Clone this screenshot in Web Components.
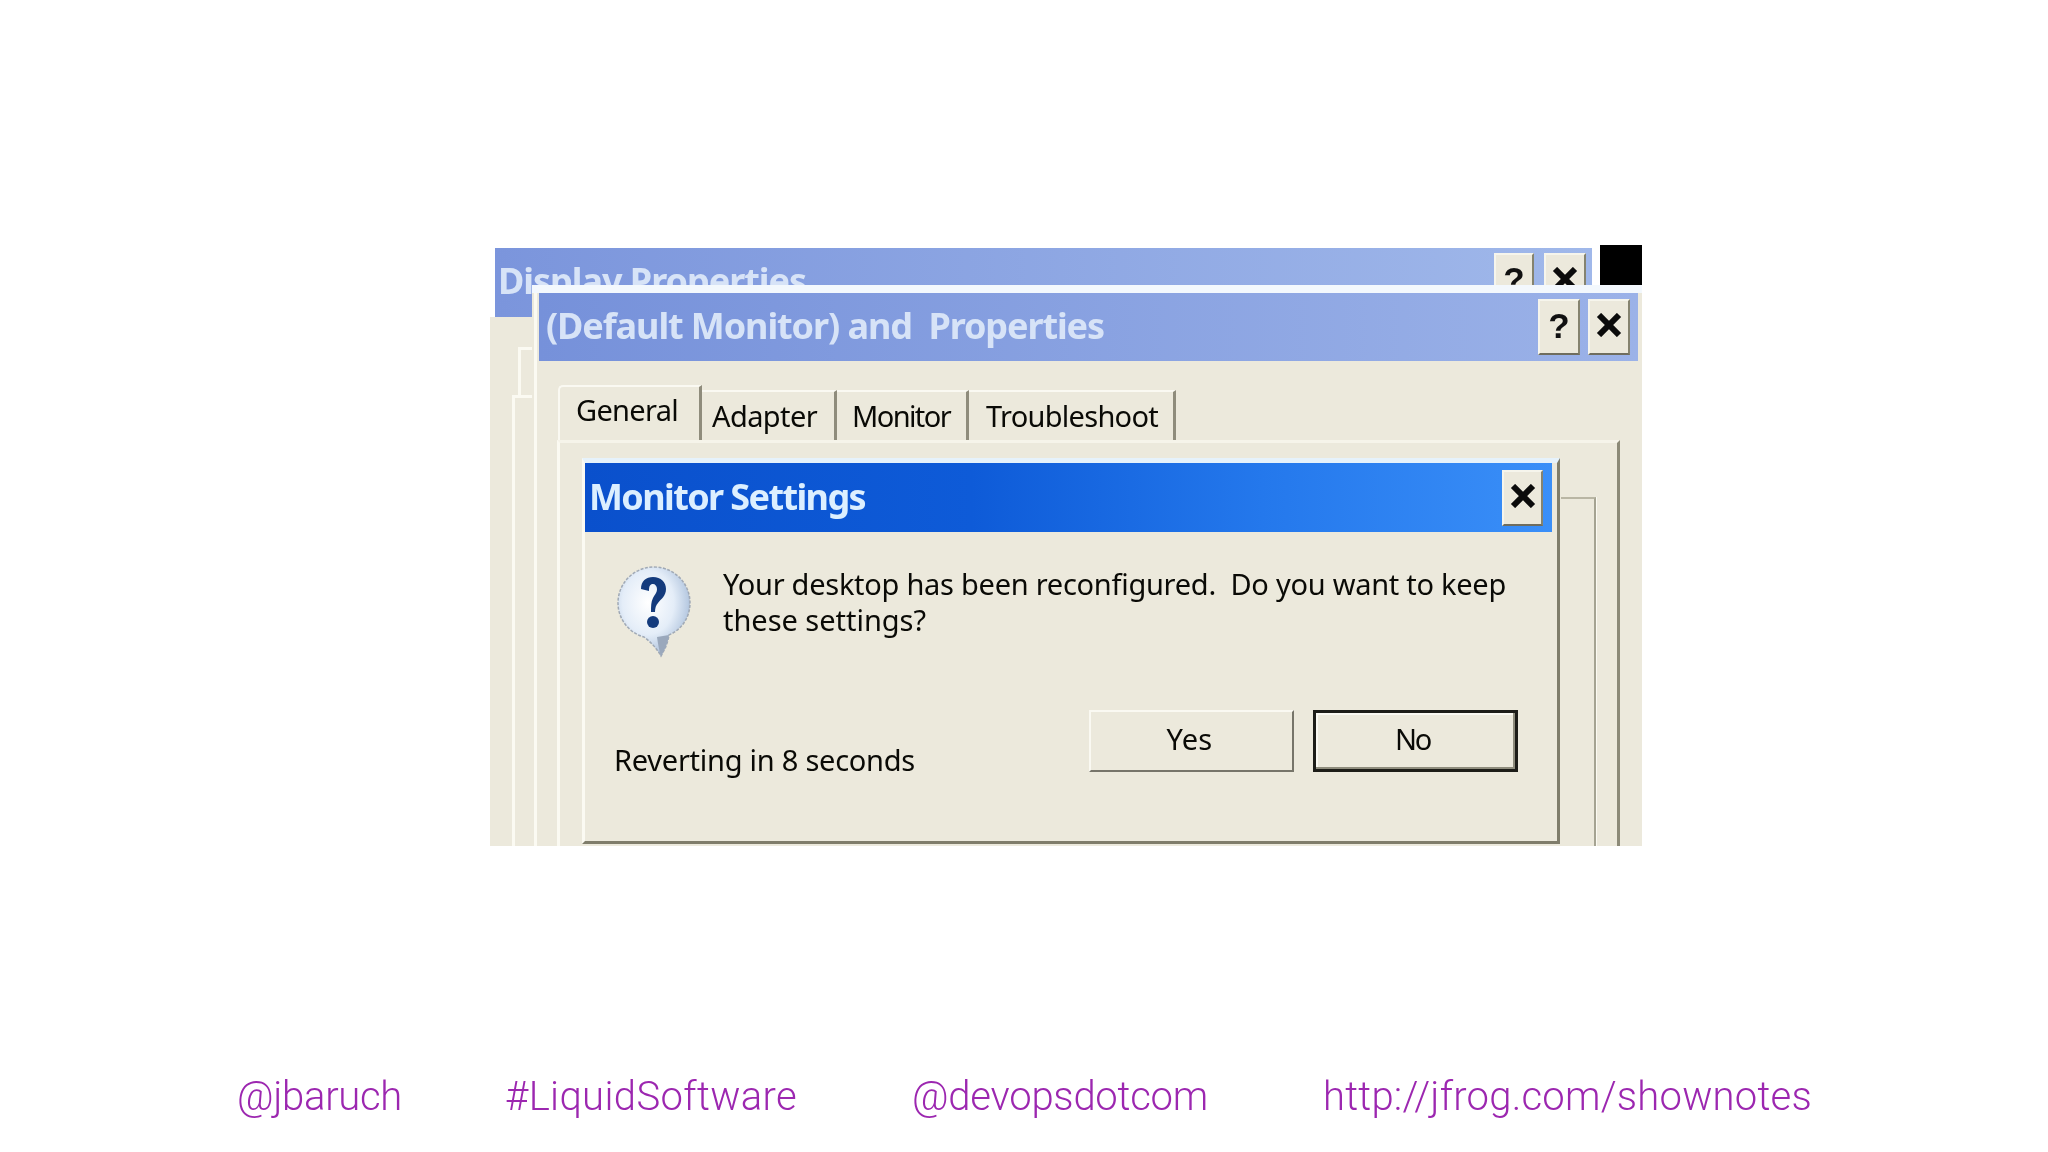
<!DOCTYPE html>
<html lang="en">
<head>
<meta charset="utf-8">
<title>Monitor Settings</title>
<style>
html,body{margin:0;padding:0;background:#fff}
body{width:2048px;height:1152px;overflow:hidden}
</style>
</head>
<body>
<x-slide>
  <x-shot>
    <x-titlebar slot="back" kind="back" pad="3" h="69">
      <x-t w="308" size="36" weight="700" color="#d7e3f7">Display Properties</x-t>
      <x-capbtn slot="btns" w="40" glyph="help"></x-capbtn>
      <x-capbtn slot="btns" w="42" glyph="close"></x-capbtn>
    </x-titlebar>
    <x-window>
      <x-titlebar slot="title" kind="prop" pad="7" h="68">
        <x-t w="558" size="36" weight="700" color="#d7e3f7">(Default Monitor) and  Properties</x-t>
        <x-capbtn slot="btns" w="42" glyph="help"></x-capbtn>
        <x-capbtn slot="btns" w="42" glyph="close"></x-capbtn>
      </x-titlebar>
      <x-tabs slot="tabs">
        <x-tab active style="--w:144px;--pl:16px"><x-t w="102" size="29">General</x-t></x-tab>
        <x-tab style="--w:135px;--pl:10px"><x-t w="105" size="29">Adapter</x-t></x-tab>
        <x-tab style="--w:132px;--pl:15px"><x-t w="98" size="29">Monitor</x-t></x-tab>
        <x-tab style="--w:207px;--pl:17px"><x-t w="172" size="29">Troubleshoot</x-t></x-tab>
      </x-tabs>
      <x-panel slot="panel">
        <x-dialog>
          <x-titlebar slot="title" kind="active" pad="4" h="69">
            <x-t w="276" size="36" weight="700" color="#dcefff">Monitor Settings</x-t>
            <x-capbtn slot="btns" w="41" glyph="close"></x-capbtn>
          </x-titlebar>
          <x-qicon slot="icon"></x-qicon>
          <x-message slot="message">
            <x-t w="783" size="29">Your desktop has been reconfigured.  Do you want to keep</x-t>
            <x-t w="203" size="29">these settings?</x-t>
          </x-message>
          <x-t slot="status" w="301" size="29">Reverting in 8 seconds</x-t>
          <x-btn slot="actions"><x-t w="46" size="29">Yes</x-t></x-btn>
          <x-btn slot="actions" default><x-t w="35" size="29">No</x-t></x-btn>
        </x-dialog>
      </x-panel>
    </x-window>
  </x-shot>
  <x-footer>
    <x-link style="--w:268px"><x-t w="165" size="40" weight="300" family="Roboto" color="#9c27b0">@jbaruch</x-t></x-link>
    <x-link style="--w:407px"><x-t w="292" size="40" weight="300" family="Roboto" color="#9c27b0">#LiquidSoftware</x-t></x-link>
    <x-link style="--w:411px"><x-t w="296" size="40" weight="300" family="Roboto" color="#9c27b0">@devopsdotcom</x-t></x-link>
    <x-link style="--w:488px"><x-t w="489" size="40" weight="300" family="Roboto" color="#9c27b0">http://jfrog.com/shownotes</x-t></x-link>
  </x-footer>
</x-slide>

<script>
const ctx = document.createElement('canvas').getContext('2d');
function def(name, css, html, init){
  customElements.define(name, class extends HTMLElement{
    constructor(){super();const r=this.attachShadow({mode:'open'});
      r.innerHTML='<style>'+css+'</style>'+(typeof html==='function'?html(this):html);}
    connectedCallback(){ if(init) init(this); }
  });
}
/* Text fitted to a measured width with letter-spacing */
def('x-t',':host{display:block;white-space:pre;line-height:36px}','<slot></slot>',el=>{
  const size=+el.getAttribute('size'),weight=el.getAttribute('weight')||400,
    fam=el.getAttribute('family')||'Noto Sans',w=+el.getAttribute('w'),
    txt=el.textContent;
  ctx.font=`${weight} ${size}px "${fam}"`;
  el.style.cssText+=`;font:${weight} ${size}px "${fam}",sans-serif;color:${el.getAttribute('color')||'#0a0a06'};`+
    `letter-spacing:${((w-ctx.measureText(txt).width)/txt.length).toFixed(3)}px;line-height:36px`;
});
def('x-slide',':host{display:flex;flex-direction:column;width:2048px;height:1152px;background:#fff}','<slot></slot>');
def('x-shot',`:host{display:block;position:relative;box-sizing:border-box;width:1152px;height:601px;margin:245px 0 0 490px;
  background:linear-gradient(#fff,#fff) 0 0/100% 72px no-repeat,#ece9dc;filter:blur(.75px);overflow:hidden}
  .back{position:absolute;left:5px;top:3px;width:1097px}
  .black{position:absolute;left:1110px;top:0;width:42px;height:40px;background:#000}
  .line{position:absolute;background:#fbfaf2}
  .a{left:22px;top:150px;width:3px;bottom:0}.a2{left:22px;top:150px;width:20px;height:3px}
  .b{left:28px;top:102px;width:3px;height:48px}.b2{left:28px;top:102px;width:14px;height:3px}`,
  `<div class="back"><slot name="back"></slot></div><div class="black"></div>
   <div class="line a"></div><div class="line a2"></div><div class="line b"></div><div class="line b2"></div><slot></slot>`);
def('x-window',`:host{position:absolute;left:42px;top:40px;width:1110px;height:561px;box-sizing:border-box;display:flex;flex-direction:column;
   background:#ece9dc;border-top:8px solid #f3f8fd}
  .left{position:absolute;left:2px;top:0;bottom:0;width:3px;background:#fbfaf2}
  .t{margin-left:7px;width:1099px}.tabs{margin:24px 0 0 26px}.p{flex:1;margin-left:25px;margin-right:22px;display:flex;min-height:0}`,
  `<div class="left"></div><div class="t"><slot name="title"></slot></div><div class="tabs"><slot name="tabs"></slot></div><div class="p"><slot name="panel"></slot></div>`);
def('x-titlebar',`:host{display:flex;align-items:center;justify-content:space-between;box-sizing:border-box}
  :host([kind=back]){background:linear-gradient(90deg,#7b95dc,#a0b8ea);align-items:flex-start;padding-top:5px}
  :host([kind=prop]){background:linear-gradient(90deg,#7691da,#9bb2e8)}
  :host([kind=active]){background:linear-gradient(90deg,#0a50cc 0%,#0e5bd8 40%,#2478ec 70%,#3a8ff8 100%)}
  .txt{flex:1;white-space:nowrap;margin-top:-2px}.btns{display:flex;gap:8px;margin-right:8px}
  :host([kind=back]) .btns{gap:10px;margin-right:6px}:host([kind=back]) .txt{margin-top:10px}
  :host([kind=active]) .btns{margin-right:9px}`,
  el=>`<style>:host{height:${el.getAttribute('h')}px;padding-left:${el.getAttribute('pad')}px}</style><div class="txt"><slot></slot></div><div class="btns"><slot name="btns"></slot></div>`);
def('x-capbtn',`:host{display:flex;align-items:center;justify-content:center;box-sizing:border-box;height:56px;padding-bottom:4px;background:#ece9dc;
   border:2px solid;border-color:#f6f5ec #85836f #6f6d5e #f6f5ec}
  span{font:700 35px/1 "Liberation Sans",sans-serif;color:#111}`,
  el=>`<style>:host{width:${el.getAttribute('w')}px}</style>`+(el.getAttribute('glyph')==='help'
    ?'<span>?</span>'
    :'<svg width="26" height="24" viewBox="0 0 26 24" aria-hidden="true"><path d="M3 2L23 22M23 2L3 22" stroke="#0b0b0b" stroke-width="6" fill="none"/></svg>'));
def('x-tabs',':host{display:flex;align-items:flex-end;height:55px}','<slot></slot>');
def('x-tab',`:host{display:block;box-sizing:border-box;width:var(--w);padding-left:var(--pl);height:50px;padding-top:6px;
   border-top:2px solid #faf9f2;border-right:3px solid #8f8c7c}
  :host([active]){height:55px;padding-top:5px;border-left:2px solid #faf9f2;border-top-left-radius:5px}`,'<slot></slot>');
def('x-panel',`:host{display:flex;flex:1;align-items:flex-start;box-sizing:border-box;padding:15px 0 0 22px;
   border-top:3px solid #f6f4ea;border-left:3px solid #fbfaf2;border-right:3px solid #8c8a78}
  .rect{align-self:stretch;box-sizing:border-box;width:35px;margin:39px 0 0 1px;border-top:2px solid #b9b6a4;border-right:2px solid #a5a392;box-shadow:1px 0 0 #fbfaf2}`,
  '<slot></slot><div class="rect"></div>');
def('x-dialog',`:host{display:block;box-sizing:border-box;width:978px;height:386px;background:#ece9dc;
   border-top:5px solid #e6f2fb;border-left:3px solid #fbfaf2;border-right:3px solid #7f7d6b;border-bottom:3px solid #7f7d6b}
  .t{margin-right:5px}
  .top{display:flex;gap:32px;padding:33px 0 0 32px;height:95px}
  .bot{display:flex;margin-top:50px;padding:0 39px 0 29px}
  .st{margin-top:32px}.act{display:flex;gap:19px;margin-left:auto}`,
  `<div class="t"><slot name="title"></slot></div>
   <div class="top"><slot name="icon"></slot><slot name="message"></slot></div>
   <div class="bot"><div class="st"><slot name="status"></slot></div><div class="act"><slot name="actions"></slot></div></div>`);
def('x-message',':host{display:block;margin-top:1px}','<slot></slot>');
def('x-qicon',':host{display:block;width:74px;height:95px;flex:none}',
  `<svg width="74" height="95" viewBox="0 0 74 95" aria-hidden="true">
    <defs><radialGradient id="g" cx=".42" cy=".4" r=".65"><stop offset="0" stop-color="#ffffff"/><stop offset=".55" stop-color="#e4edf8"/><stop offset=".85" stop-color="#b9cbe2"/><stop offset="1" stop-color="#8494ad"/></radialGradient></defs>
    <path d="M37 2C57 2 73 18 73 38C73 53 64 65 52 70C51 78 47 86 44 91C40 84 34 77 27 72C12 68 1 54 1 38C1 18 17 2 37 2Z" fill="url(#g)" stroke="#a0a9b5" stroke-width="1.5" stroke-dasharray="3 1.5"/>
    <path d="M44 91C47 86 51 78 52 70L40 72C41 79 42 85 44 91Z" fill="#9aa8bc"/>
    <path d="M24 24C24 16 29 12 36 12C44 12 49 17 49 24C49 31 44 34 41 38C39 40 38 43 38 47H34C34 41 34 37 36 33C38 29 40 28 40 24C40 21 38 19 36 19C33 19 32 21 32 26Z" fill="#143b7d"/>
    <circle cx="36" cy="57" r="6" fill="#143b7d"/>
  </svg>`);
def('x-btn',`:host{display:flex;align-items:center;justify-content:center;box-sizing:border-box;width:205px;height:62px;padding:0 4px 5px 0;background:#ece9dc;
   border:2px solid;border-color:#faf9f2 #77756a #77756a #faf9f2}
  :host([default]){padding:0 6px 5px 0;border:3px solid #1d1d18;box-shadow:inset -2px -2px 0 #8e8c7c,inset 2px 2px 0 #faf9f2}`,'<slot></slot>');
def('x-footer',`:host{display:flex;margin:0;padding:233px 0 0 237px;filter:blur(.4px)}`,'<slot></slot>');
def('x-link',':host{display:block;width:var(--w);height:40px}','<slot></slot>');
</script>
</body>
</html>
